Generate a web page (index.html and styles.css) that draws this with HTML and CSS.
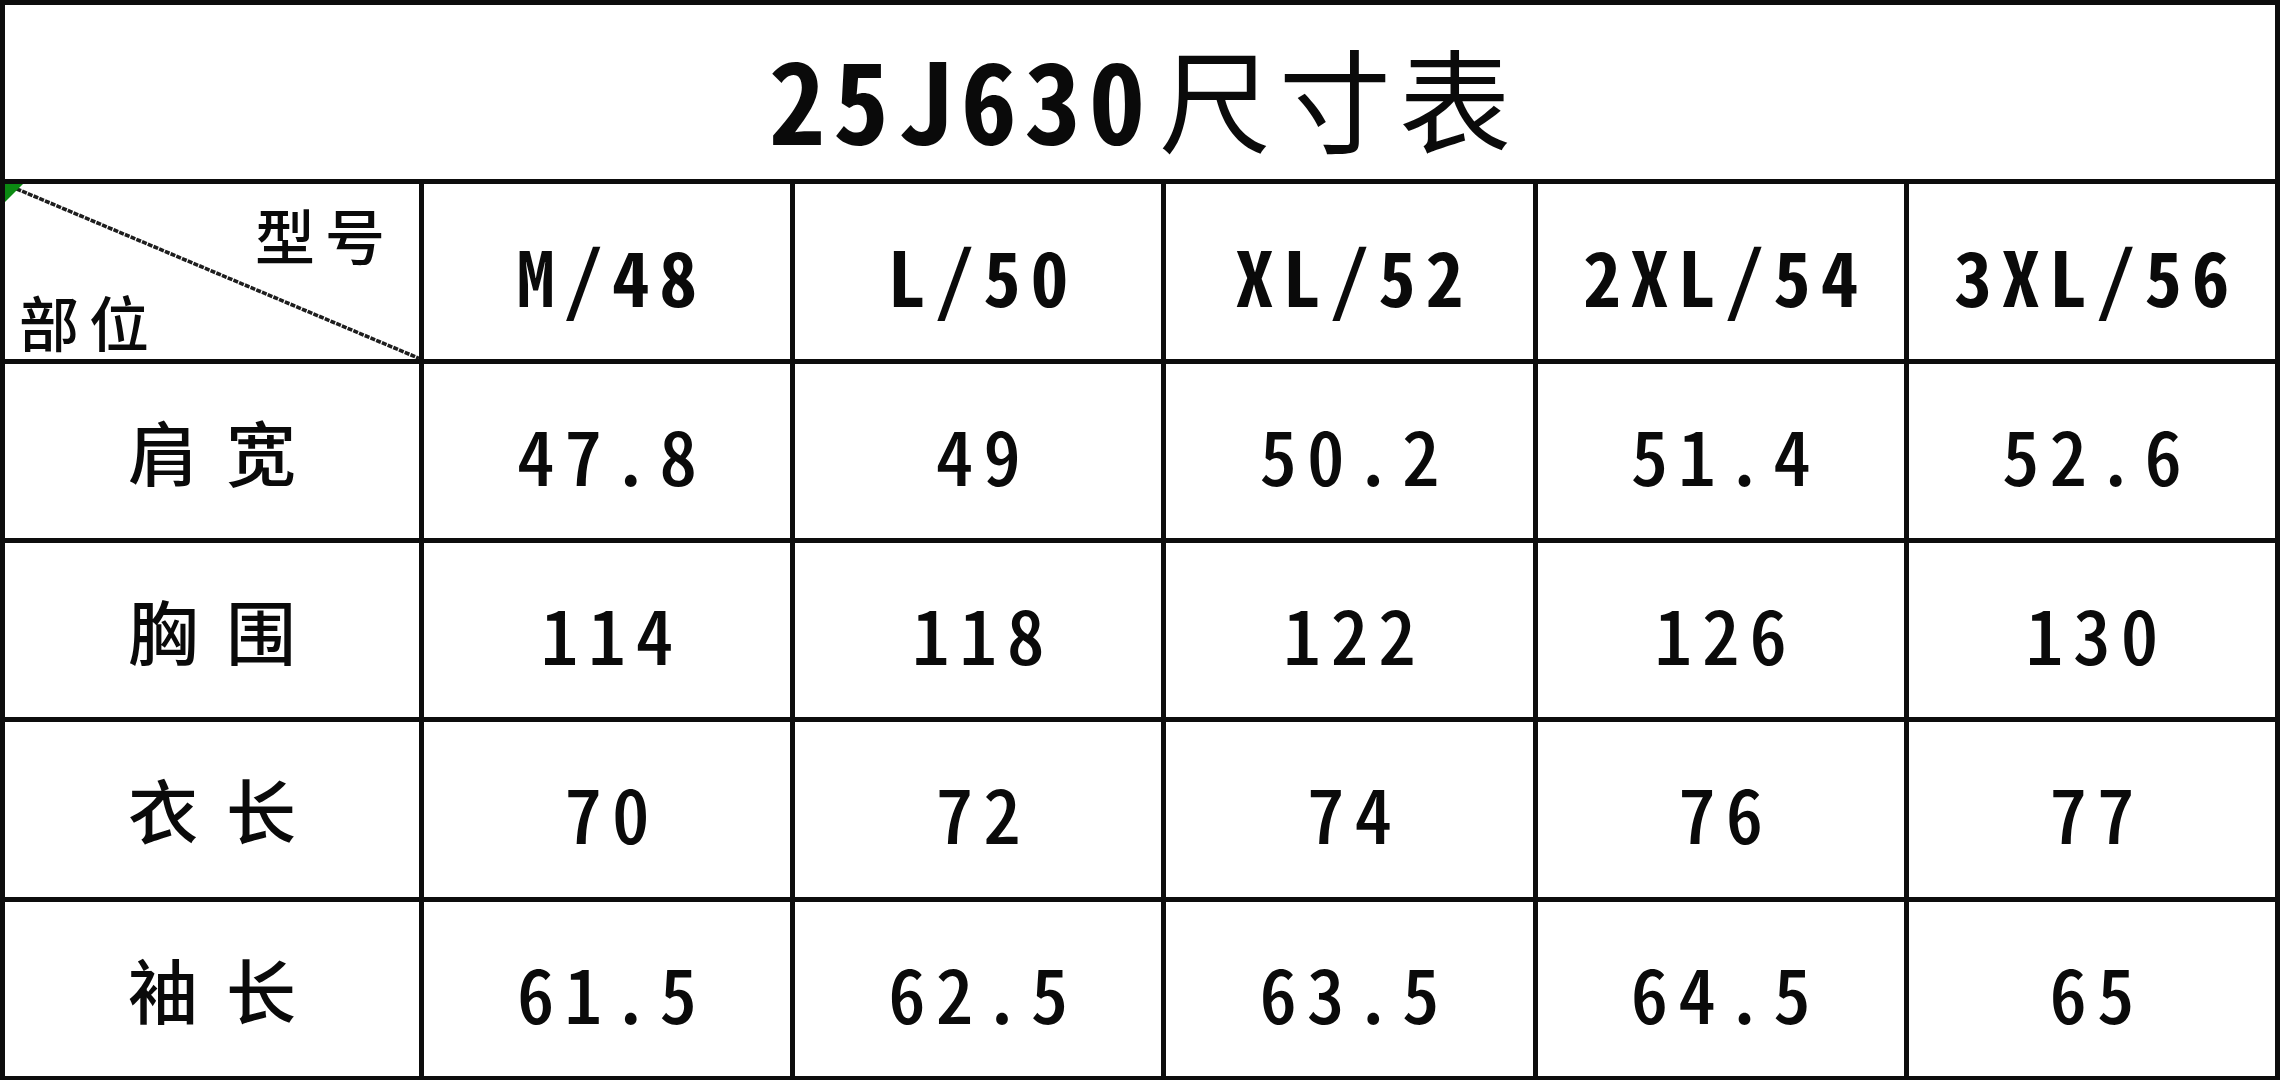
FILE: index.html
```html
<!DOCTYPE html>
<html lang="zh-CN">
<head>
<meta charset="utf-8">
<title>25J630尺寸表</title>
<link rel="stylesheet" href="styles.css">
</head>
<body>
<div class="sheet">
  <div class="cell title"><span class="title-num">25J630</span><span class="title-cjk">尺寸表</span></div>

  <div class="cell corner">
    <svg class="diag" viewBox="0 0 414 175" preserveAspectRatio="none">
      <line x1="0" y1="0" x2="414" y2="175" stroke="#1e1e1e" stroke-width="3.6" stroke-dasharray="5 1.2"/>
    </svg>
    <svg class="flag" viewBox="0 0 18 18"><polygon points="0,0 18,0 0,18" fill="#0b8a12"/></svg>
    <span class="corner-top">型号</span>
    <span class="corner-bottom">部位</span>
  </div>
  <div class="cell head"><span class="t">M/48</span></div>
  <div class="cell head"><span class="t">L/50</span></div>
  <div class="cell head"><span class="t">XL/52</span></div>
  <div class="cell head"><span class="t">2XL/54</span></div>
  <div class="cell head"><span class="t">3XL/56</span></div>

  <div class="cell label"><span class="l">肩宽</span></div>
  <div class="cell num"><span class="t">47.8</span></div>
  <div class="cell num"><span class="t">49</span></div>
  <div class="cell num"><span class="t">50.2</span></div>
  <div class="cell num"><span class="t">51.4</span></div>
  <div class="cell num"><span class="t">52.6</span></div>

  <div class="cell label"><span class="l">胸围</span></div>
  <div class="cell num"><span class="t">114</span></div>
  <div class="cell num"><span class="t">118</span></div>
  <div class="cell num"><span class="t">122</span></div>
  <div class="cell num"><span class="t">126</span></div>
  <div class="cell num"><span class="t">130</span></div>

  <div class="cell label"><span class="l">衣长</span></div>
  <div class="cell num"><span class="t">70</span></div>
  <div class="cell num"><span class="t">72</span></div>
  <div class="cell num"><span class="t">74</span></div>
  <div class="cell num"><span class="t">76</span></div>
  <div class="cell num"><span class="t">77</span></div>

  <div class="cell label"><span class="l">袖长</span></div>
  <div class="cell num"><span class="t">61.5</span></div>
  <div class="cell num"><span class="t">62.5</span></div>
  <div class="cell num"><span class="t">63.5</span></div>
  <div class="cell num"><span class="t">64.5</span></div>
  <div class="cell num"><span class="t">65</span></div>
</div>
</body>
</html>
```
FILE: styles.css
```css
html, body {
  margin: 0;
  padding: 0;
  background: #ffffff;
}

.sheet {
  box-sizing: border-box;
  width: 2280px;
  height: 1080px;
  padding: 5px 5px 4px 5px;
  background: #0d0d0d;
  display: grid;
  grid-template-columns: 414px repeat(5, 1fr);
  grid-template-rows: repeat(6, 1fr);
  gap: 5px;
  font-family: "Noto Sans CJK SC", "Noto Sans", sans-serif;
  color: #0a0a0a;
}

.cell {
  background: #ffffff;
  display: flex;
  align-items: center;
  justify-content: center;
  min-width: 0;
}

.title {
  grid-column: 1 / -1;
  padding-top: 8px;
}

.title-num {
  font-size: 112px;
  font-weight: 700;
  font-feature-settings: "hwid" 1;
  letter-spacing: 8px;
  line-height: 1.2;
}

.title-cjk {
  font-size: 112px;
  font-weight: 400;
  letter-spacing: 8px;
  line-height: 1.2;
  margin-left: 6px;
  margin-right: -8px;
}

.t {
  font-size: 75px;
  font-feature-settings: "hwid" 1;
  letter-spacing: 10px;
  margin-right: -10px;
  line-height: 1.2;
}

.head .t {
  font-weight: 700;
  padding-top: 8px;
}

.num .t {
  font-weight: 500;
  padding-top: 6px;
}

.l {
  font-size: 70px;
  font-weight: 500;
  letter-spacing: 28px;
  margin-right: -28px;
  line-height: 1.2;
}

.corner {
  position: relative;
  flex-direction: column;
  align-items: stretch;
  justify-content: space-between;
  padding: 14px 34px 2px 14px;
}

.corner-top,
.corner-bottom {
  font-size: 60px;
  font-weight: 500;
  letter-spacing: 10px;
  line-height: 1.2;
  position: relative;
}

.corner-top {
  align-self: flex-end;
  margin-right: -10px;
}

.corner-bottom {
  align-self: flex-start;
}

.diag {
  position: absolute;
  left: 0;
  top: 0;
  width: 100%;
  height: 100%;
}

.flag {
  position: absolute;
  left: 0;
  top: 0;
  width: 18px;
  height: 18px;
}
```
